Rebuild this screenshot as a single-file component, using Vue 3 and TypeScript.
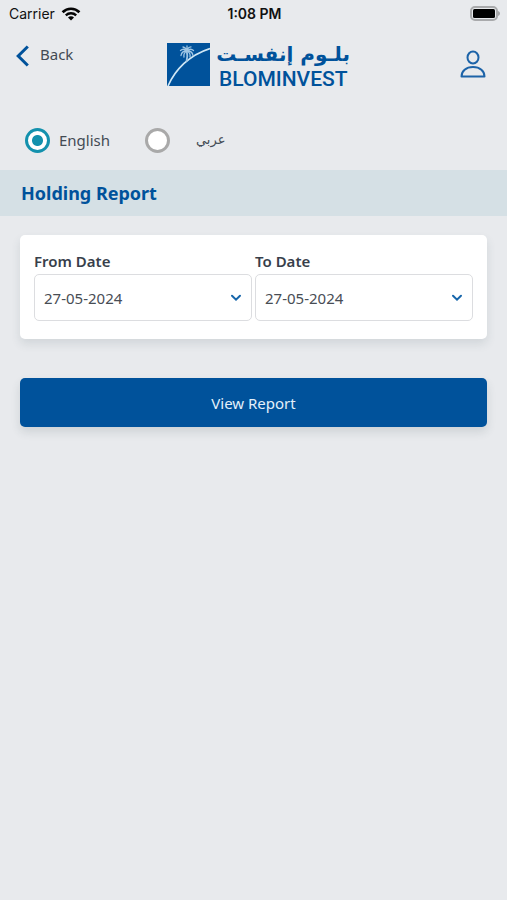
<script setup lang="ts">
import { ref } from 'vue'

interface DateField {
  id: string
  label: string
  value: string
}

const language = ref<'en' | 'ar'>('en')
const fields = ref<DateField[]>([
  { id: 'from-date', label: 'From Date', value: '27-05-2024' },
  { id: 'to-date', label: 'To Date', value: '27-05-2024' },
])
</script>

<template>
  <div class="screen">
    <div class="status">
      <div class="carrier">
        <span>Carrier</span>
        <svg width="20" height="16" viewBox="0 0 20 16" aria-hidden="true">
          <path d="M1.6 6.2a12 12 0 0 1 16.8 0" fill="none" stroke="#050505" stroke-width="2.7" />
          <path d="M4.8 9.4a7.4 7.4 0 0 1 10.4 0" fill="none" stroke="#050505" stroke-width="2.3" />
          <path d="M10 14.6 7 11.5a4.2 4.2 0 0 1 6 0z" fill="#050505" />
        </svg>
      </div>
      <span class="time">1:08 PM</span>
      <svg class="battery" width="31" height="16" viewBox="0 0 31 16" aria-hidden="true">
        <rect x="2" y="1" width="26" height="13" rx="4" fill="none" stroke="#a9aaac" stroke-width="2" />
        <rect x="4" y="3" width="22" height="9" rx="1.5" fill="#000" />
        <path d="M29 5v5c1.400-.5 2-1.400 2-2.500S30.400 5.500 29 5z" fill="#a5a6a8" />
      </svg>
    </div>

    <header class="header">
      <button class="back" type="button">
        <svg width="14" height="22" viewBox="0 0 14 22" aria-hidden="true">
          <path d="M11.800 1.500 2.200 11l9.600 9.500" fill="none" stroke="#00529b" stroke-width="3" />
        </svg>
        <span>Back</span>
      </button>
      <div class="logo">
        <svg width="43" height="44" viewBox="0 0 43 44" aria-hidden="true">
          <rect width="43" height="43" fill="#00529b" />
          <path d="M1 43C8 27 22 12 43 5.500" fill="none" stroke="#cfe7f5" stroke-width="1.700" />
          <g fill="none" stroke="#9fc6e4" stroke-width="1.300" stroke-linecap="round">
            <path d="M19.800 8c.8 3.500.7 6.500-.2 10" stroke-width="1.800" />
            <path d="M20 8c-2-2-4.500-2.300-6.500-.5M20 8c-3-.2-5.500 1.500-6 4.500M20 8c-2 1-3.500 3.500-3 6" />
            <path d="M20 8c2-2 4.500-2.300 6.500-.5M20 8c3-.2 5.500 1.500 6 4.500M20 8c2 1 3.500 3.500 3 6" />
            <path d="M20 8c-.8-2-2.300-3.800-4-4M20 8c.5-2.500 2-4 4-4.200M20 8V3" />
          </g>
        </svg>
        <div class="wordmark">
          <span class="arabic-name" lang="ar" dir="rtl">بلـوم إنفسـت</span>
          <span class="latin-name">BLOMINVEST</span>
        </div>
      </div>
      <button class="account" type="button" aria-label="Account">
        <svg width="26" height="28" viewBox="0 0 26 28" aria-hidden="true">
          <g fill="none" stroke="#1c63a8" stroke-width="2" stroke-linejoin="round">
            <ellipse cx="13" cy="7.500" rx="5.500" ry="6" />
            <path d="M1.500 26.500c0-5.500 4.500-9.500 11.500-9.500s11.500 4 11.500 9.500z" />
          </g>
        </svg>
      </button>
    </header>

    <main>
      <div class="languages" role="radiogroup" aria-label="Language">
        <label class="choice">
          <input v-model="language" type="radio" name="language" value="en" />
          <span>English</span>
        </label>
        <label class="choice choice-arabic">
          <input v-model="language" type="radio" name="language" value="ar" />
          <span lang="ar">عربي</span>
        </label>
      </div>

      <h1 class="title">Holding Report</h1>

      <form class="report" @submit.prevent>
        <div class="card">
          <div v-for="field in fields" :key="field.id" class="field">
            <label :for="field.id">{{ field.label }}</label>
            <div class="picker">
              <select :id="field.id" v-model="field.value">
                <option value="27-05-2024">27-05-2024</option>
              </select>
              <svg class="chevron" width="12" height="8" viewBox="0 0 12 8" aria-hidden="true">
                <path d="M2 1.800 6 5.600l4-3.800" fill="none" stroke="#1766ab" stroke-width="2" stroke-linecap="round" />
              </svg>
            </div>
          </div>
        </div>
        <button class="submit" type="submit">View Report</button>
      </form>
    </main>
  </div>
</template>

<style>
body {
  background: #e8eaed;
}
</style>

<style scoped>
.screen {
  min-height: 100vh;
  background: #e8eaed;
  color: #434a54;
  font-family: "Noto Sans", "Open Sans", sans-serif;
  font-size: 15px;
  line-height: 20px;
}

button {
  margin: 0;
  border: 0;
  background: none;
  color: inherit;
  font: inherit;
  cursor: pointer;
}

.status {
  display: grid;
  grid-template-columns: 1fr auto 1fr;
  align-items: center;
  height: 28px;
  padding: 0 7px 0 9px;
  color: #111;
  font-family: Inter, sans-serif;
  font-size: 14px;
}

.carrier {
  display: flex;
  align-items: center;
  gap: 6px;
}

.carrier svg {
  display: block;
}

.time {
  font-weight: 600;
}

.battery {
  justify-self: end;
}

.header {
  display: grid;
  grid-template-columns: 1fr auto 1fr;
  height: 82px;
  padding: 12px 6px 0 16px;
  box-sizing: border-box;
}

.back {
  display: flex;
  align-items: center;
  gap: 10px;
  height: 32px;
  padding: 0;
}

.back span {
  padding-bottom: 4px;
}

.logo {
  display: flex;
  align-items: flex-start;
  gap: 9px;
  padding-top: 3px;
  color: #00529b;
}

.wordmark {
  display: flex;
  flex-direction: column;
  width: 131px;
  white-space: nowrap;
}

.arabic-name {
  font-family: "DejaVu Sans", sans-serif;
  font-size: 20px;
  font-weight: 700;
  line-height: 22px;
}

.latin-name {
  font-family: Roboto, sans-serif;
  font-size: 21px;
  font-weight: 500;
  line-height: 28px;
}

.account {
  justify-self: end;
  align-self: start;
  padding: 10px 15px 0;
}

.account svg {
  display: block;
}

.languages {
  display: flex;
  align-items: center;
  gap: 35px;
  height: 60px;
  padding: 0 25px;
}

.choice {
  display: flex;
  align-items: center;
  gap: 9px;
}

.choice-arabic {
  gap: 26px;
  font-family: "DejaVu Sans", sans-serif;
  font-size: 13px;
}

.choice input {
  appearance: none;
  width: 25px;
  height: 25px;
  margin: 0;
  border: 3px solid #a9a9a9;
  border-radius: 50%;
  background: #fff;
}

.choice input:checked {
  border-color: #1391ad;
  background: radial-gradient(circle, #1391ad 5px, #fff 6px);
}

.title {
  margin: 0;
  padding: 11px 21px;
  background: #d5e0e5;
  color: #00529b;
  font-size: 18px;
  font-weight: 700;
  line-height: 24px;
}

.report {
  display: flex;
  flex-direction: column;
  gap: 39px;
  padding: 19px 20px;
}

.card {
  display: grid;
  grid-template-columns: 1fr 1fr;
  gap: 3px;
  padding: 16px 14px 18px;
  border-radius: 5px;
  background: #fff;
  box-shadow: 0 5px 10px rgba(50, 70, 80, 0.12);
}

.field label {
  display: block;
  margin-bottom: 3px;
  color: #383f4b;
  font-size: 15px;
  font-weight: 600;
}

.picker {
  display: grid;
  align-items: center;
}

.picker select {
  grid-area: 1 / 1;
  appearance: none;
  width: 100%;
  height: 47px;
  padding: 0 30px 0 9px;
  border: 1px solid #dcdde0;
  border-radius: 5px;
  background: #fff;
  color: #484d55;
  font: inherit;
}

.chevron {
  grid-area: 1 / 1;
  justify-self: end;
  margin-right: 10px;
  pointer-events: none;
}

.submit {
  height: 49px;
  border-radius: 5px;
  background: #00529b;
  color: #e3f0fa;
  box-shadow: 0 5px 10px rgba(50, 70, 80, 0.14);
}
</style>
